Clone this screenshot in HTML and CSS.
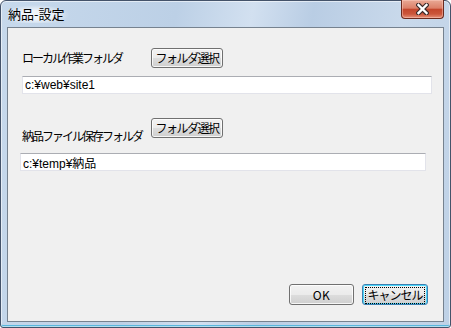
FILE: index.html
```html
<!DOCTYPE html>
<html lang="ja">
<head>
  <meta charset="UTF-8" />
  <title>納品-設定</title>
  <link rel="stylesheet" href="styles.css">
</head>
<body>

<div class="window">
  <!-- Title bar -->
  <div class="titlebar">
    <span class="title">納品-設定</span>
    <button class="close" title="閉じる">
      <svg width="13" height="12" viewBox="0 0 13 12">
        <path d="M2.5 2 L10.5 10 M10.5 2 L2.5 10" stroke="#3c2a2a" stroke-width="4.6" stroke-linecap="square" fill="none"/>
        <path d="M2.5 2 L10.5 10 M10.5 2 L2.5 10" stroke="#ffffff" stroke-width="2.4" stroke-linecap="square" fill="none"/>
      </svg>
    </button>
  </div>

  <!-- Client area -->
  <div class="client">
    <div class="row">
      <span class="label">ローカル作業フォルダ</span>
      <button class="btn btn-pick">フォルダ選択</button>
    </div>
    <input type="text" class="path path-local" value="c:¥web¥site1">

    <div class="row row-output">
      <span class="label">納品ファイル保存フォルダ</span>
      <button class="btn btn-pick">フォルダ選択</button>
    </div>
    <input type="text" class="path path-output" value="c:¥temp¥納品">

    <div class="actions">
      <button class="btn btn-ok">OK</button>
      <button class="btn btn-cancel"><span class="focus">キャンセル</span></button>
    </div>
  </div>
</div>

</body>
</html>
```

FILE: styles.css
```css
body { margin: 0; font-family: "Noto Sans CJK JP", sans-serif; font-size: 12px; color: #000; }

.window {
  width: 451px; height: 328px; box-sizing: border-box;
  border: 1px solid #44536a; border-radius: 6px 6px 3px 3px;
  padding: 0 6px 5px 6px;
  display: flex; flex-direction: column;
  background: linear-gradient(100deg, #c7d9ec 0%, #bcd0e6 35%, #d2e0f0 50%, #b9cde4 62%, #c9d9eb 80%, #bed1e6 100%);
  box-shadow: inset 0 0 0 1px rgba(255,255,255,0.55), inset 0 -2px 0 #58b6dc;
}

.titlebar { height: 26px; display: flex; justify-content: space-between; align-items: flex-start; }
.title {
  margin: 4px 0 0 1px; padding: 0 4px 0 0; line-height: 18px; font-size: 13px;
  background: radial-gradient(ellipse at 45% 55%, rgba(255,255,255,0.75) 30%, rgba(255,255,255,0) 72%);
}
.close {
  width: 43px; height: 19px; margin-top: -1px; padding: 0;
  display: flex; align-items: center; justify-content: center;
  border: 1px solid #6b2a1e; border-top: none; border-radius: 0 0 4px 4px;
  background: linear-gradient(#e9a995 0%, #dc8069 45%, #c4472d 52%, #cb563b 78%, #e6917a 100%);
  box-shadow: inset 0 0 0 1px rgba(255,210,200,0.45);
}

.client {
  flex: 1; display: flex; flex-direction: column;
  background: #f0f0f0; border: 1px solid #76828f;
}

.row { display: flex; align-items: center; margin: 20px 0 0 14px; }
.label { width: 129px; letter-spacing: -2px; line-height: 16px; white-space: nowrap; }
.row-output { margin-top: 24px; align-items: flex-start; }
.row-output .label { padding-top: 10px; }

.btn {
  box-sizing: border-box; height: 20px; padding: 0; font-family: inherit; font-size: 12px;
  letter-spacing: -1.5px; color: #000; line-height: 16px;
  border: 1px solid #707070; border-radius: 3px;
  background: linear-gradient(#f2f2f2 0%, #ebebeb 50%, #dddddd 51%, #cfcfcf 100%);
  box-shadow: inset 0 0 0 1px rgba(255,255,255,0.8);
}
.btn-pick { width: 72px; }

.path {
  box-sizing: border-box; height: 18px; margin: 8px 0 0 14px; width: 410px; padding: 0 2px;
  font-family: "Liberation Sans", "Noto Sans CJK JP", sans-serif; font-size: 12px; color: #000;
  background: #fff; outline: none;
  border: 1px solid #e2e3ea; border-top-color: #abadb3;
}
.path-output { margin: 9px 0 0 12px; width: 406px; }

.actions { margin-top: auto; display: flex; justify-content: flex-end; gap: 8px; padding: 0 15px 16px 0; }
.btn-ok { width: 65px; height: 21px; letter-spacing: 0.5px; }
.btn-cancel {
  width: 66px; height: 21px; border-color: #3c7fb1; padding: 2px;
  box-shadow: inset 0 0 0 1px #48d7fb;
}
.focus { display: block; height: 15px; line-height: 14px; border: 1px dotted #000; letter-spacing: -1px; }
```
